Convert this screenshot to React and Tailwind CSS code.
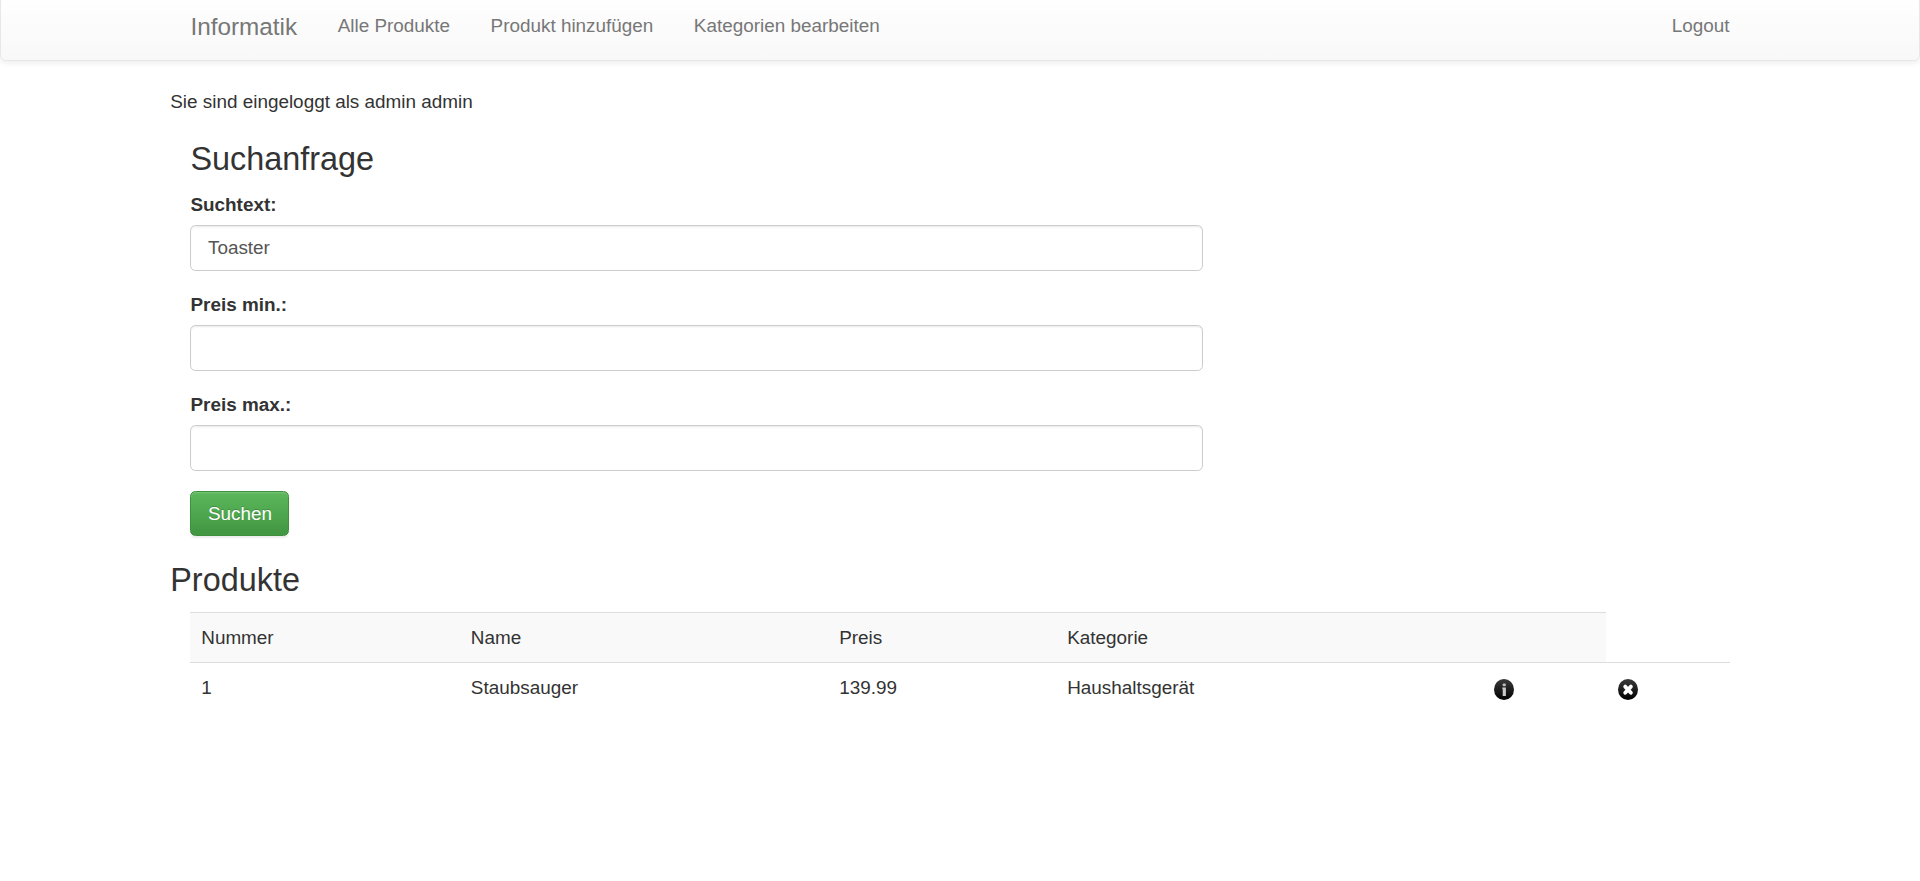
import React from "react";

const navLinks = ["Alle Produkte", "Produkt hinzufügen", "Kategorien bearbeiten"];
const fields = [
  { label: "Suchtext:", value: "Toaster" },
  { label: "Preis min.:", value: "" },
  { label: "Preis max.:", value: "" },
];

function InfoIcon() {
  return (
    <svg className="mt-[5px] block h-[21px] w-[20px]" viewBox="0 0 20 21">
      <defs>
        <linearGradient id="infoFill" x1="0" y1="0" x2="0" y2="1">
          <stop offset="0" stopColor="#3a3a3a" />
          <stop offset="1" stopColor="#000" />
        </linearGradient>
      </defs>
      <ellipse cx="10" cy="10.5" rx="10" ry="10.5" fill="url(#infoFill)" />
      <rect x="8.7" y="4.5" width="3.1" height="2.7" rx="0.8" fill="#bdbdbd" />
      <path d="M8.2 8.4H11.9V17H8.7V9.8H8.2Z" fill="#c8c8c8" />
    </svg>
  );
}

function DeleteIcon() {
  return (
    <svg className="ml-px mt-[5px] block h-[21px] w-[20px]" viewBox="0 0 20 21">
      <defs>
        <linearGradient id="deleteFill" x1="0" y1="0" x2="0" y2="1">
          <stop offset="0" stopColor="#3a3a3a" />
          <stop offset="1" stopColor="#000" />
        </linearGradient>
      </defs>
      <ellipse cx="10" cy="10.5" rx="10" ry="10.5" fill="url(#deleteFill)" />
      <path d="M7.2 7.6L12.9 13.8M12.9 7.6L7.2 13.8" stroke="#fff" strokeWidth="3.8" strokeLinecap="round" />
    </svg>
  );
}

export default function App() {
  return (
    <div className="min-h-[881px] overflow-hidden bg-white font-['Liberation_Sans',Arial,sans-serif] text-[18.9px] leading-[27px] text-[#333]">
      <nav className="-mt-[8px] h-[69px] rounded-[5.4px] border border-[#e7e7e7] bg-linear-to-b from-white to-[#f8f8f8] text-[#777] shadow-[0_1.35px_6.75px_rgba(0,0,0,0.075)]">
        <div className="mx-auto flex w-[1579.5px] justify-between px-[20.25px] pt-[19px]">
          <div className="flex gap-[40.5px]">
            <a className="pt-px text-[24.3px]">Informatik</a>
            {navLinks.map((link) => (
              <a key={link}>{link}</a>
            ))}
          </div>
          <a>Logout</a>
        </div>
      </nav>

      <main className="mx-auto w-[1579.5px] pt-[27px]">
        <p>Sie sind eingeloggt als admin admin</p>

        <form className="ml-[20.2px] mt-[27px] w-[1012.5px]">
          <h3 className="mb-[13.5px] text-[32.4px] leading-[35.64px]">Suchanfrage</h3>
          {fields.map((field) => (
            <div key={field.label} className="mb-[20.2px]">
              <label className="mb-[6.75px] block font-bold">{field.label}</label>
              <input
                type="text"
                defaultValue={field.value}
                className="block h-[46px] w-full rounded-[5.4px] border border-[#ccc] bg-white px-[16.5px] text-[#555] shadow-[inset_0_1.35px_1.35px_rgba(0,0,0,0.075)]"
              />
            </div>
          ))}
          <button
            type="button"
            className="block h-[45px] w-[99px] rounded-[5.4px] border border-[#3e8f3e] bg-linear-to-b from-[#5cb85c] to-[#419641] text-center text-white shadow-[inset_0_1.35px_0_rgba(255,255,255,0.15),0_1.35px_1.35px_rgba(0,0,0,0.075)] text-shadow-[0_-1.35px_0_rgba(0,0,0,0.2)]"
          >
            Suchen
          </button>
        </form>

        <h3 className="mb-[13.5px] mt-[27px] text-[32.4px] leading-[35.64px]">Produkte</h3>

        <table className="ml-[20.2px] w-[1540px] table-fixed border-separate border-spacing-0">
          <colgroup>
            <col className="w-[269.6px]" />
            <col className="w-[368.4px]" />
            <col className="w-[228px]" />
            <col className="w-[427px]" />
            <col className="w-[123px]" />
            <col className="w-[124px]" />
          </colgroup>
          <tbody className="[&_td]:border-t [&_td]:border-[#ddd] [&_td]:px-[10.8px] [&_td]:py-[10.8px] [&_td]:align-top">
            <tr className="h-[50px] [&>td]:bg-[#f9f9f9]">
              <td>Nummer</td>
              <td>Name</td>
              <td>Preis</td>
              <td>Kategorie</td>
              <td></td>
            </tr>
            <tr className="h-[50px]">
              <td>1</td>
              <td>Staubsauger</td>
              <td>139.99</td>
              <td>Haushaltsgerät</td>
              <td><InfoIcon /></td>
              <td><DeleteIcon /></td>
            </tr>
          </tbody>
        </table>
      </main>
    </div>
  );
}
